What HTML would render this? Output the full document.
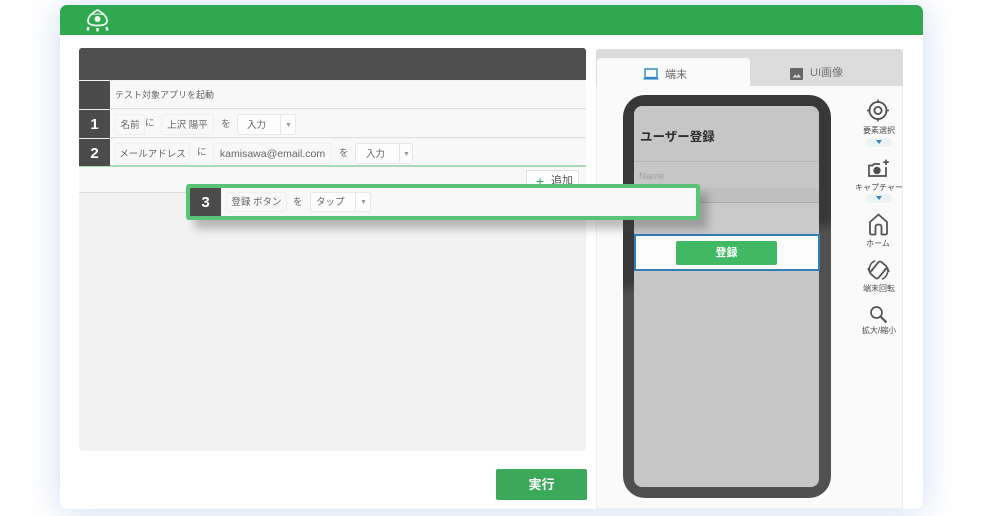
<!DOCTYPE html>
<html lang="ja">
<head>
<meta charset="utf-8">
<style>
html,body{margin:0;padding:0;background:#fff}
body{width:982px;height:516px;position:relative;overflow:hidden;font-family:"Liberation Sans","Noto Sans CJK JP",sans-serif;color:#555}
div,span{position:absolute;box-sizing:border-box;white-space:nowrap}
#w{left:0;top:0;width:982px;height:516px;overflow:hidden;filter:blur(.35px)}
.chip{background:#f8f8f8;border:1px solid #efefef;border-radius:2px;font-size:9.5px;line-height:21px;height:21px;text-align:center;color:#666}
.sel{background:#fdfdfd;border:1px solid #e8e8e8;border-radius:2px;font-size:9.5px;line-height:21px;height:21px;color:#666}
.sel i{position:absolute;top:0;bottom:0;width:1px;background:#e6e6e6}
.sel b{position:absolute;font-weight:400;font-size:7px;color:#999;top:0}
.t{font-size:9.5px;color:#666;line-height:14px}
.num{background:#4b4b4b;color:#fff;font-weight:700;font-size:15px;text-align:center}
.lab{font-size:8px;color:#4a4a4a;text-align:center;line-height:10px;width:60px}
.pill{width:26px;height:9px;background:#ecf1f1;border-radius:5px}
.pill:after{content:"";position:absolute;left:10px;top:2px;border-left:3px solid transparent;border-right:3px solid transparent;border-top:4px solid #2b87c4}
</style>
</head>
<body>
<div id="w">
<div style="left:60px;top:5px;width:863px;height:504px;background:#fff;border-radius:7px;box-shadow:0 2px 34px rgba(165,188,228,.55);overflow:hidden">
  <div style="left:0;top:0;width:863px;height:30px;background:#2fa84f"></div>
</div>
<svg style="position:absolute;left:84px;top:8px" width="28" height="24" viewBox="0 0 28 24" fill="none">
  <path d="M13.500 2 C8 5 4 9 4 13 C4 16.500 8 17.500 13.500 17.500 C19 17.500 23 16.500 23 13 C23 9 19 5 13.500 2Z" stroke="#f1faf3" stroke-width="1.800"/>
  <circle cx="13.500" cy="11" r="3" fill="#f1faf3"/>
  <path d="M6 7 Q13.500 5 21 7" stroke="#f1faf3" stroke-width="1"/>
  <path d="M4.500 19 L3.500 22.500 M13.500 20 V23.500 M22.500 19 L23.500 22.500" stroke="#f1faf3" stroke-width="2.400"/>
</svg>

<!-- left panel -->
<div style="left:79px;top:48px;width:507px;height:403px;background:#f2f2f2;border-radius:3px;overflow:hidden">
  <div style="left:0;top:0;width:507px;height:32px;background:#4d4d4d"></div>
  <div style="left:0;top:33px;width:507px;height:28px;background:#f8f8f8;border-bottom:1px solid #dedede"></div>
  <div style="left:0;top:62px;width:507px;height:28px;background:#f8f8f8;border-bottom:1px solid #dedede"></div>
  <div style="left:0;top:91px;width:507px;height:26px;background:#f8f8f8"></div>
  <div style="left:0;top:117px;width:507px;height:2px;background:#a9d9ba"></div>
  <div style="left:0;top:119px;width:507px;height:26px;background:#f8f8f8;border-bottom:1px solid #dcdcdc"></div>
  <div class="num" style="left:0;top:33px;width:31px;height:28px"></div>
  <div class="num" style="left:0;top:62px;width:31px;height:28px;line-height:30px">1</div>
  <div class="num" style="left:0;top:91px;width:31px;height:27px;line-height:29px">2</div>
</div>
<div class="t" style="left:115px;top:88px;font-size:9px">テスト対象アプリを起動</div>

<div class="chip" style="left:115px;top:114px;width:30px">名前</div>
<div class="t" style="left:145px;top:117px">に</div>
<div class="chip" style="left:161px;top:114px;width:53px">上沢 陽平</div>
<div class="t" style="left:221px;top:118px">を</div>
<div class="sel" style="left:237px;top:114px;width:59px"><span style="left:9px">入力</span><i style="left:42px"></i><b style="left:47px">▼</b></div>

<div class="chip" style="left:115px;top:143px;width:75px">メールアドレス</div>
<div class="t" style="left:197px;top:146px">に</div>
<div class="chip" style="left:213px;top:143px;width:119px;font-size:10.500px">kamisawa@email.com</div>
<div class="t" style="left:339px;top:147px">を</div>
<div class="sel" style="left:355px;top:143px;width:58px"><span style="left:10px">入力</span><i style="left:43px"></i><b style="left:47px">▼</b></div>

<div style="left:526px;top:170px;width:53px;height:24px;background:#fff;border:1px solid #ddd;border-radius:2px;font-size:11px;color:#555;line-height:20px;padding-left:9px"><span style="left:9px;color:#3aa85a;font-size:14px;top:0">+</span><span style="left:24px;top:0">追加</span></div>

<!-- right panel -->
<div style="left:596px;top:49px;width:307px;height:460px;background:#fafafa;border:1px solid #eee;border-top:0;border-radius:3px 3px 0 0">
  <div style="left:-1px;top:0;width:307px;height:37px;background:#dcdcdc;border-radius:3px 3px 0 0"></div>
  <div style="left:0;top:9px;width:153px;height:28px;background:#fafafa;border-radius:4px 4px 0 0"></div>
</div>
<svg style="position:absolute;left:643px;top:68px" width="16" height="12" viewBox="0 0 16 12" fill="none"><rect x="2" y="1" width="12" height="8.500" stroke="#2b87c4" stroke-width="1.400"/><path d="M0.500 10.800H15.500" stroke="#2b87c4" stroke-width="1.500"/></svg>
<div style="left:665px;top:67px;font-size:11px;color:#666;line-height:16px">端末</div>
<svg style="position:absolute;left:790px;top:68px" width="14" height="12" viewBox="0 0 14 12"><rect width="13" height="12" rx="1" fill="#666"/><path d="M2.500 9.500 L5 6.500 L6.800 8.300 L8.500 6 L11 9.500Z" fill="#ddd"/></svg>
<div style="left:810px;top:65px;font-size:11px;color:#777;line-height:16px">UI画像</div>

<!-- phone -->
<div style="left:623px;top:95px;width:208px;height:403px;border-radius:22px;background:linear-gradient(162.600deg,#383838 0,#383838 40%,#505050 43%,#505050 100%)"></div>
<div style="left:634px;top:106px;width:185px;height:381px;border-radius:8px;background:#c6c6c6;overflow:hidden">
  <div style="left:0;top:55px;width:185px;height:1px;background:#b5b5b5"></div>
  <div style="left:0;top:82px;width:185px;height:14px;background:#bfbfbf"></div>
  <div style="left:0;top:96px;width:185px;height:1px;background:#aaa"></div>
  <div style="left:0;top:97px;width:185px;height:31px;background:#cacaca"></div>
</div>
<div style="left:640px;top:128px;font-size:12.500px;font-weight:700;color:#2e2e2e;line-height:18px">ユーザー登録</div>
<div style="left:639px;top:170px;font-size:9.500px;color:#a0a0a0;line-height:13px">Name</div>
<div style="left:634px;top:234px;width:186px;height:37px;background:#fbfbfb;border:2px solid #2f7fb8"></div>
<div style="left:676px;top:241px;width:101px;height:24px;background:#41b863;border-radius:2px;color:#fff;font-size:11px;font-weight:700;text-align:center;line-height:25px">登録</div>

<!-- side tools -->
<svg style="position:absolute;left:866px;top:98px" width="24" height="25" viewBox="0 0 24 25" fill="none" stroke="#4f4f4f"><circle cx="12" cy="12.500" r="8.500" stroke-width="1.800"/><circle cx="12" cy="12.500" r="3.600" stroke-width="1.800"/><path d="M12 1.500V5M12 20V23.500M1 12.500H4.500M19.500 12.500H23" stroke-width="1.500"/></svg>
<div class="lab" style="left:849px;top:126px">要素選択</div>
<div class="pill" style="left:866px;top:138px"></div>
<svg style="position:absolute;left:867px;top:158px" width="24" height="20" viewBox="0 0 24 20" fill="none"><path d="M13 6 H7 L5.500 7.500 H2 V18 H19 V9" stroke="#4f4f4f" stroke-width="1.700"/><circle cx="10" cy="12.500" r="3.700" fill="#4f4f4f"/><path d="M19 1.500 V7 M16.200 4.200 H21.800" stroke="#4f4f4f" stroke-width="1.600"/></svg>
<div class="lab" style="left:849px;top:183px">キャプチャー</div>
<div class="pill" style="left:866px;top:194px"></div>
<svg style="position:absolute;left:868px;top:213px" width="21" height="23" viewBox="0 0 21 23" fill="none" stroke="#555" stroke-width="1.800" stroke-linejoin="round"><path d="M10.500 1.500 L2 9 V20 C2 21 2.500 21.500 3.500 21.500 H7.500 V14 C7.500 12.500 8.500 11.500 10.500 11.500 C12.500 11.500 13.500 12.500 13.500 14 V21.500 H17.500 C18.500 21.500 19 21 19 20 V9Z"/></svg>
<div class="lab" style="left:848px;top:239px">ホーム</div>
<svg style="position:absolute;left:866px;top:258px" width="25" height="24" viewBox="0 0 25 24" fill="none" stroke="#555" stroke-width="1.800"><rect x="7.500" y="4" width="10" height="16" rx="2" transform="rotate(40 12.500 12)"/><path d="M3.500 14 A9.500 9.500 0 0 1 9 2.800 M21.500 10 A9.500 9.500 0 0 1 16 21.200 M2 10 L3.500 14 L7 12 M23 14 L21.500 10 L18 12" stroke-width="1.500"/></svg>
<div class="lab" style="left:849px;top:284px">端末回転</div>
<svg style="position:absolute;left:869px;top:305px" width="19" height="19" viewBox="0 0 19 19" fill="none" stroke="#555"><circle cx="7.500" cy="7.500" r="5.500" stroke-width="1.700"/><path d="M11.500 11.500L17.500 17.500" stroke-width="2.200"/></svg>
<div class="lab" style="left:849px;top:326px">拡大/縮小</div>

<!-- floating row -->
<div style="left:186px;top:184px;width:514px;height:36px;background:#f8f8f8;border:4px solid #5ac476;border-radius:3px;box-shadow:8px 9px 9px rgba(60,60,60,.32)"></div>
<div class="num" style="left:190px;top:188px;width:31px;height:28px;line-height:30px">3</div>
<div class="chip" style="left:226px;top:192px;width:61px;height:20px;line-height:20px">登録 ボタン</div>
<div class="t" style="left:293px;top:196px">を</div>
<div class="sel" style="left:310px;top:192px;width:61px;height:20px;line-height:20px"><span style="left:5px">タップ</span><i style="left:44px"></i><b style="left:49px">▼</b></div>

<div style="left:496px;top:469px;width:91px;height:31px;background:#3ca95a;border-radius:2px;color:#fff;font-size:13px;font-weight:700;text-align:center;line-height:32px">実行</div>
</div>
</body>
</html>
